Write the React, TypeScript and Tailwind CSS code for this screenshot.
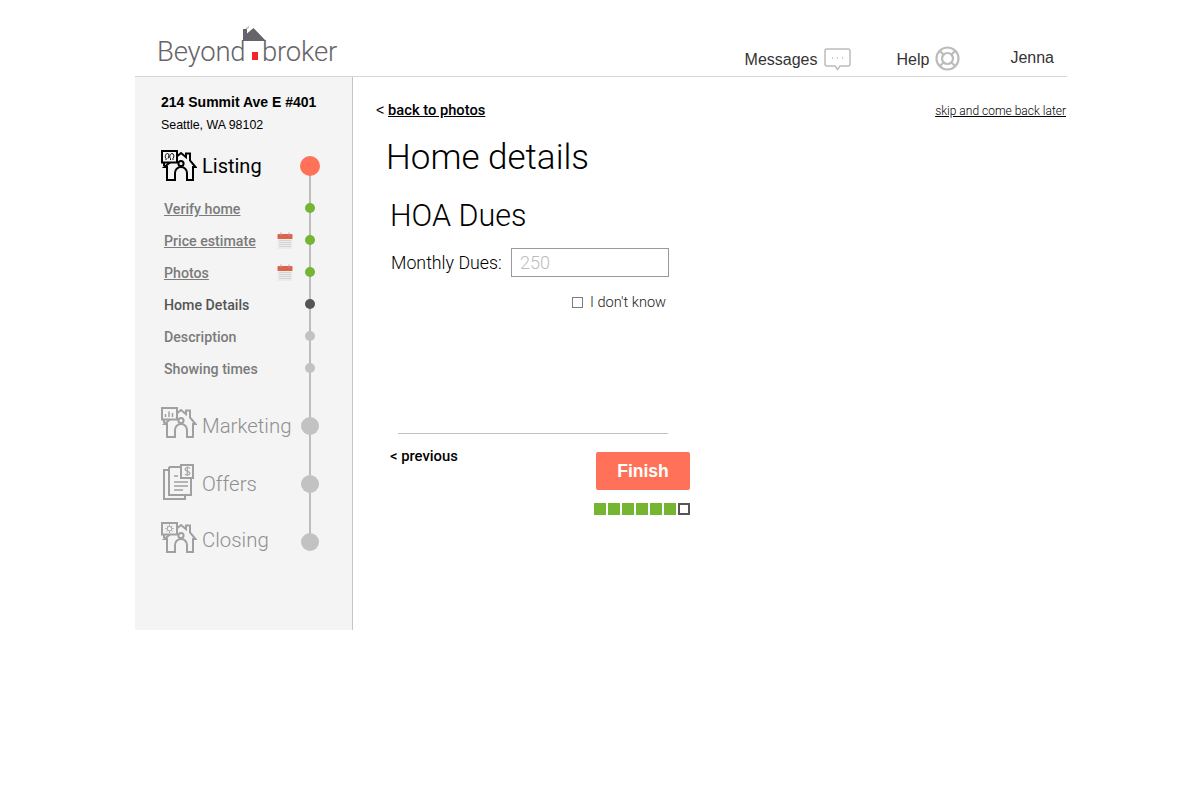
import type { ReactNode } from "react";

const sans = "font-['Liberation_Sans',Arial,sans-serif]";
const light = "font-['Roboto',Arial,sans-serif] font-light";
const medium = "font-['Roboto',Arial,sans-serif] font-medium";

function HouseIcon({ children, className }: { children: ReactNode; className: string }) {
  return (
    <svg className={className} viewBox="0 0 36 32" fill="none" stroke="currentColor" strokeWidth="2">
      <path d="M6 30V17H3.500L20 3l5 4.200V3.500h4v7l5.500 6.500H32v13h-6v-7a6 6 0 0 0-12 0v7z" />
      <circle cx="20" cy="13.500" r="2.600" />
      <path d="M1 1h15v11.500H1z" fill="#f4f4f4" />
      <path d="M3 12.500V16" />
      {children}
    </svg>
  );
}

function LogoHouse() {
  return (
    <svg className="h-[36px] w-[24px] shrink-0" viewBox="0 0 24 36">
      <path d="M2.500 2.500 6 0v1.500L4 3z" fill="#b5b5b5" />
      <path d="M0 15V3h4v4.500L10.500 2 23 15z" fill="#66646a" />
      <rect x="9" y="26" width="6" height="8" fill="#f2252b" />
    </svg>
  );
}

function CalendarIcon() {
  return (
    <svg className="h-[17px] w-[16px] shrink-0" viewBox="0 0 16 17">
      <rect x="0.500" y="2" width="15" height="15" fill="#ececec" />
      <rect x="0.500" y="2" width="15" height="5" rx="1" fill="#d9654f" />
      <path d="M4 0.500v3M12 0.500v3" stroke="#a9a9a9" strokeWidth="1" />
      <path
        d="M2.500 8.500h11M2.500 10.500h11M2.500 12.500h11M2.500 14.500h11"
        stroke="#bdbdbd"
        strokeWidth="1"
        strokeDasharray="1 1"
      />
    </svg>
  );
}

function SubRow({
  label,
  dot,
  text,
  link,
  calendar,
}: {
  label: string;
  dot: string;
  text: string;
  link?: boolean;
  calendar?: boolean;
}) {
  return (
    <div className="flex h-[32px] items-center pl-[29px] pr-[32px]">
      <span className={`flex-1 pt-[4px] text-[14.200px] ${medium} ${text} ${link ? "underline" : ""}`}>{label}</span>
      {calendar && <CalendarIcon />}
      <span className="ml-[7px] flex w-[20px] justify-center">
        <span className={`h-[10px] w-[10px] rounded-full ${dot}`} />
      </span>
    </div>
  );
}

function StepRow({
  icon,
  label,
  labelPad,
  active,
}: {
  icon: ReactNode;
  label: string;
  labelPad: string;
  active?: boolean;
}) {
  return (
    <div className="flex h-[40px] items-center pl-[26px] pr-[32px]">
      <span className="flex w-[41px] shrink-0 items-center">{icon}</span>
      <span className={`flex-1 ${labelPad} ${active ? "font-['Roboto',Arial,sans-serif] text-[20px] text-black" : `${light} text-[20.400px] text-[#8f8f8f]`}`}>{label}</span>
      <span className="flex w-[20px] justify-center">
        <span className={`rounded-full ${active ? "h-[20px] w-[20px] bg-[#ff7259]" : "h-[18px] w-[18px] bg-[#c2c2c2]"}`} />
      </span>
    </div>
  );
}

export default function App() {
  return (
    <div className={`${sans} h-[803px] bg-white pl-[135px]`}>
      <div className="w-[932px]">
        <header className="flex h-[77px] border-b border-[#d6d6d6]">
          <div className={`ml-[22px] mt-[26px] flex h-[40px] items-start text-[27.500px] leading-[52px] text-[#66646a] ${light}`}>
            <span className="w-[88px] tracking-[-0.2px]">Beyond</span>
            <span className="-ml-[2px] -mr-[5px]"><LogoHouse /></span>
            <span className="tracking-[-0.2px]">broker</span>
          </div>
          <nav className="ml-auto flex items-start pr-[13px] text-[#333333]">
            <span className="mt-[50px] text-[16px] leading-[20px]">Messages</span>
            <svg className="ml-[6px] mt-[48px] h-[23px] w-[27px]" viewBox="0 0 27 23" fill="none" stroke="#bcbcbc" strokeWidth="1.500">
              <path d="M3 1h21a2 2 0 0 1 2 2v13a2 2 0 0 1-2 2h-8l-2.500 3.500L11 18H3a2 2 0 0 1-2-2V3a2 2 0 0 1 2-2z" />
              <path d="M8 10h1M13 10h1M18 10h1" />
            </svg>
            <span className="ml-[46px] mt-[50px] text-[16px] leading-[20px]">Help</span>
            <svg className="ml-[6px] mt-[46px] h-[25px] w-[25px]" viewBox="0 0 25 25" fill="none" stroke="#bcbcbc">
              <circle cx="12.500" cy="12.500" r="11" strokeWidth="2.200" />
              <circle cx="12.500" cy="12.500" r="5.500" strokeWidth="2.200" />
              <path d="M5 5l3.500 3.500M20 5l-3.500 3.500M5 20l3.500-3.500M20 20l-3.500-3.500" strokeWidth="2.200" />
            </svg>
            <span className="ml-[50px] mt-[48px] text-[16px] leading-[20px]">Jenna</span>
          </nav>
        </header>

        <div className="flex">
          <aside className="relative h-[553px] w-[218px] shrink-0 border-r border-[#c4c4c4] bg-[#f4f4f4]">
            <div className="absolute left-[174px] top-[89px] h-[376px] w-[2px] bg-[#bdbdbd]" />
            <div className="relative">
              <p className="pl-[26px] pt-[15px] text-[14px] font-bold leading-[20px] text-black">214 Summit Ave E #401</p>
              <p className="mt-[3px] pl-[26px] text-[12.400px] leading-[20px] text-black">Seattle, WA 98102</p>
              <div className="mt-[11px]">
                <StepRow
                  active
                  label="Listing"
                  labelPad="pt-[0px]"
                  icon={
                    <HouseIcon className="mb-[1px] h-[32px] w-[36px] text-black">
                      <path d="M5 10V8.500C3.500 7 4.500 3.500 6.500 3.500S8 7 7 8.500M9.500 10V8.500C8 7 9 3.500 11 3.500s2.500 3.500 1 5V10" strokeWidth="1" />
                    </HouseIcon>
                  }
                />
              </div>
              <div className="mt-[6px]">
                <SubRow link label="Verify home" dot="bg-[#76b531]" text="text-[#7b7b7b]" />
                <SubRow link calendar label="Price estimate" dot="bg-[#76b531]" text="text-[#7b7b7b]" />
                <SubRow link calendar label="Photos" dot="bg-[#76b531]" text="text-[#7b7b7b]" />
                <SubRow label="Home Details" dot="bg-[#555555]" text="text-[#555555]" />
                <SubRow label="Description" dot="bg-[#c2c2c2]" text="text-[#7b7b7b]" />
                <SubRow label="Showing times" dot="bg-[#c2c2c2]" text="text-[#7b7b7b]" />
              </div>
              <div className="mt-[22px]">
                <StepRow
                  label="Marketing"
                  labelPad="pt-[0px]"
                  icon={
                    <HouseIcon className="mb-[6px] h-[32px] w-[36px] text-[#a0a0a0]">
                      <path d="M4.500 10V7M8 10V4.500M11.500 10V6" strokeWidth="1.500" />
                    </HouseIcon>
                  }
                />
              </div>
              <div className="mt-[18px]">
                <StepRow
                  label="Offers"
                  labelPad="pt-[0px]"
                  icon={
                    <svg className="mb-[4px] ml-[2px] h-[36px] w-[32px] text-[#a0a0a0]" viewBox="0 0 32 36" fill="none" stroke="currentColor" strokeWidth="2">
                      <path d="M6 6H1v29h21v-4" />
                      <path d="M6 3h12M6 3v28h22V14" />
                      <path d="M11 12h4M11 18h14M11 22h14M11 26h9" strokeWidth="1.500" />
                      <path d="M18 1h12v13H18z" fill="#f4f4f4" />
                      <path d="M27 4.500c-1-1.500-5-1.500-5 .8s5 1.600 5 4c0 2.200-4 2.200-5 .7M24.300 2.500v9.500" strokeWidth="1.100" />
                    </svg>
                  }
                />
              </div>
              <div className="mt-[18px]">
                <StepRow
                  label="Closing"
                  labelPad="pb-[4px]"
                  icon={
                    <HouseIcon className="mb-[8px] h-[32px] w-[36px] text-[#a0a0a0]">
                      <circle cx="8.500" cy="6.700" r="2.300" strokeWidth="1" />
                      <path d="M8.500 2.500v1.500M8.500 9.500V11M4.300 6.700h1.500M11.200 6.700h1.500M5.500 3.700l1 1M10.500 8.700l1 1M11.500 3.700l-1 1M6.500 8.700l-1 1" strokeWidth="1" />
                    </HouseIcon>
                  }
                />
              </div>
            </div>
          </aside>

          <main className="flex-1 text-black">
            <div className="flex items-center pl-[23px] pt-[22px]">
              <p className="flex-1 text-[14px] leading-[20px]">
                {"< "}
                <span className={`${medium} text-[14.700px] underline`}>back to photos</span>
              </p>
              <a className={`pr-px pt-[2px] text-[12px] leading-[20px] underline ${light}`}>skip and come back later</a>
            </div>
            <h1 className={`ml-[33px] mt-[15px] text-[35px] leading-[44px] ${light}`}>Home details</h1>
            <h2 className={`ml-[37px] mt-[18px] text-[30.500px] leading-[36px] ${light}`}>HOA Dues</h2>
            <div className="ml-[38px] mt-[14px] flex w-[278px] items-center">
              <label className={`flex-1 text-[17.800px] leading-[29px] ${light}`}>Monthly Dues:</label>
              <div className={`flex h-[29px] w-[158px] items-center border border-[#9a9a9a] pl-[8px] text-[18px] text-[#bdbdbd] ${light}`}>250</div>
            </div>
            <div className="ml-[219px] mt-[15px] flex h-[20px] w-[97px] items-center">
              <span className="h-[11px] w-[11px] border border-[#7c7c7c]" />
              <span className={`ml-[7px] whitespace-nowrap pt-[2px] text-[14.600px] text-[#222222] ${light}`}>I don't know</span>
            </div>
            <div className="ml-[45px] mt-[121px] w-[270px] border-t border-[#c2c2c2]" />
            <div className="ml-[37px] mt-[18px] flex w-[300px] items-start">
              <p className={`flex-1 text-[14.800px] leading-[8px] ${medium}`}>{"< previous"}</p>
              <button className="h-[38px] w-[94px] rounded-[2px] bg-[#ff7259] text-[17.500px] font-bold text-white">Finish</button>
            </div>
            <div className="ml-[241px] mt-[13px] flex w-[96px] gap-[2px]">
              {[0, 1, 2, 3, 4, 5].map((i) => (
                <span key={i} className="h-[12px] w-[12px] bg-[#76b531]" />
              ))}
              <span className="h-[12px] w-[12px] border-2 border-[#555555]" />
            </div>
          </main>
        </div>
      </div>
    </div>
  );
}
